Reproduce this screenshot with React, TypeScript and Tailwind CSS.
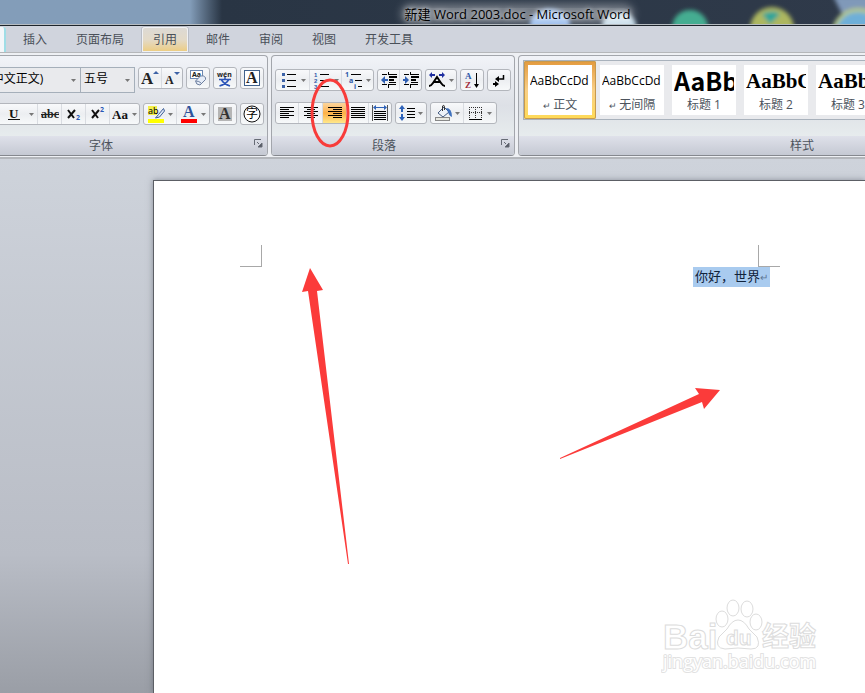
import type { ReactNode } from "react";
import clsx from "clsx";

const TABS = ["插入", "页面布局", "引用", "邮件", "审阅", "视图", "开发工具"];
const ACTIVE_TAB = "引用";

const STYLES = [
  { name: "正文", sample: "AaBbCcDd", mark: true, font: "text-xs" },
  { name: "无间隔", sample: "AaBbCcDd", mark: true, font: "text-xs" },
  {
    name: "标题 1",
    sample: "AaBbC",
    mark: false,
    font: "font-['Noto_Sans_CJK_SC',sans-serif] text-[25px] font-bold",
  },
  {
    name: "标题 2",
    sample: "AaBbC",
    mark: false,
    font: "font-['Liberation_Serif',serif] text-[21px] font-bold",
  },
  {
    name: "标题 3",
    sample: "AaBbC",
    mark: false,
    font: "font-['Liberation_Serif',serif] text-[21px] font-bold",
  },
];

interface ToolProps {
  label: string;
  width: string;
  drop?: boolean;
  active?: boolean;
  children?: ReactNode;
}

function Tool({ label, width, drop, active, children }: ToolProps) {
  return (
    <button
      type="button"
      aria-label={label}
      className={clsx(
        "flex h-full flex-none items-center justify-center gap-[3px] border-l border-[#d9dce1] first:border-l-0",
        width,
        active && "bg-linear-to-b from-[#fbd59c] via-[#fdb045] to-[#ffe88a]",
      )}
    >
      {children}
      {drop && (
        <svg width="5" height="3" viewBox="0 0 5 3" className="flex-none">
          <path d="M0 0h5L2.500 3z" fill="#777" />
        </svg>
      )}
    </button>
  );
}

function ToolBox({ width, children }: { width: string; children: ReactNode }) {
  return (
    <div
      className={clsx(
        "flex h-[22px] flex-none justify-end overflow-hidden rounded-[3px] border border-[#b3b6bc] bg-linear-to-b from-[#f8f9fb] via-[#eceef1] to-[#f7f9fa]",
        width,
      )}
    >
      {children}
    </div>
  );
}

function Icon({ w = 18, h = 18, children }: { w?: number; h?: number; children: ReactNode }) {
  return (
    <svg width={w} height={h} viewBox={`0 0 ${w} ${h}`} className="flex-none">
      {children}
    </svg>
  );
}

function AlignIcon({ rows }: { rows: [number, number][] }) {
  return (
    <Icon w={14} h={12}>
      {rows.map(([x, width], i) => (
        <rect key={i} x={x} y={i * 2} width={width} height="1" fill="#000" />
      ))}
    </Icon>
  );
}

interface GroupProps {
  title: string;
  className: string;
  children: ReactNode;
}

function Group({ title, className, children }: GroupProps) {
  return (
    <section
      className={clsx(
        "flex h-[101px] flex-none flex-col overflow-hidden rounded-[4px] border border-[#a3a6ac] border-b-[#85888e] bg-linear-to-b from-[#f1f3f8] via-[#dde0e6] to-[#edf3f2]",
        className,
      )}
    >
      <div className="flex-1">{children}</div>
      <div className="flex h-[19px] flex-none items-center bg-linear-to-b from-[#dfe1ea] to-[#c5c9d3]">
        <span className="flex-1 text-center text-[#4c535c]">{title}</span>
        <button type="button" aria-label={`${title}设置`} className="flex w-[18px] justify-end pr-1 pb-1">
          <svg width="9" height="9" viewBox="0 0 9 9">
            <path d="M.5 6V.5H7" fill="none" stroke="#666b75" />
            <path d="M3 3l2 2M8 4v4H4z" fill="#555a64" stroke="#666b75" />
          </svg>
        </button>
      </div>
    </section>
  );
}

function TitleBar() {
  return (
    <header className="relative flex h-[26px] flex-none items-center justify-center overflow-hidden border-b border-[#1d242b] bg-linear-to-r from-[#839db9] from-[190px] via-[#293544] via-[222px] to-[#2f3a4a] pt-[2px] pl-[170px]">
      <svg
        className="absolute top-0 right-0"
        width="360"
        height="25"
        viewBox="0 0 360 25"
        aria-hidden="true"
      >
        <defs>
          <filter id="soft">
            <feGaussianBlur stdDeviation="2" />
          </filter>
        </defs>
        <g filter="url(#soft)">
          <path d="M328-4h40v40h-20z" fill="#8099b9" />
          <ellipse cx="45" cy="24" rx="20" ry="15" fill="#8fb6ec" />
          <ellipse cx="114" cy="26" rx="17" ry="14" fill="#c5dbe9" />
          <circle cx="185" cy="28" r="18" fill="#45ad91" />
          <circle cx="267" cy="29" r="22" fill="#adb760" />
          <path d="M257 14q12-5 18 0l-10 10z" fill="#2fa49a" />
          <circle cx="353" cy="34" r="24" fill="#6eafd8" stroke="#b6c989" strokeWidth="4" />
        </g>
      </svg>
      <h1 className="relative rounded-full bg-white/35 font-['Open_Sans','Noto_Sans_CJK_SC',sans-serif] text-[13px] leading-3 whitespace-nowrap text-black shadow-[0_0_8px_4px_rgba(255,255,255,0.35)] text-shadow-[0_0_5px_#fff]">
        新建 Word 2003.doc - Microsoft Word
      </h1>
      <div className="absolute inset-x-0 bottom-0 h-px bg-[#b6bcc1]" />
    </header>
  );
}

function TabBar() {
  return (
    <nav className="flex h-[27px] flex-none items-end border-b border-[#b5b7ba] bg-[#d0d4dd]">
      <div className="h-[25px] w-[6px] rounded-tr-[3px] border-r-2 border-[#9fdde6] bg-[#f3f6f9]" />
      <div className="flex gap-[7px] pl-[6px]">
        {TABS.map((tab) => (
          <button
            key={tab}
            type="button"
            className={clsx(
              "h-[25px] flex-none rounded-t-[3px] px-[11px] whitespace-nowrap text-[#4a5059]",
              tab === ACTIVE_TAB &&
                "bg-linear-to-b from-[#dcd9d5] via-[#e3dac8] to-[#edcc7d] inset-ring inset-ring-[#f0f1f4] ring ring-[#b9bdc6]",
            )}
          >
            {tab}
          </button>
        ))}
      </div>
    </nav>
  );
}

function Combo({ label, value, className }: { label: string; value: string; className: string }) {
  return (
    <div className={clsx("relative flex-none", className)}>
      <select
        aria-label={label}
        className="h-[26px] w-full appearance-none border border-[#a5afba] bg-[#e9eaed] px-[3px] pb-[2px] text-black"
      >
        <option>{value}</option>
      </select>
      <svg
        width="5"
        height="3"
        viewBox="0 0 5 3"
        className="pointer-events-none absolute top-[12px] right-[5px]"
      >
        <path d="M0 0h5L2.500 3z" fill="#777" />
      </svg>
    </div>
  );
}

function FontGroup() {
  return (
    <Group title="字体" className="-ml-[48px] w-[316px]">
      <div className="flex h-[47px] items-start gap-[3px] pt-[11px]">
        <div className="flex">
          <Combo label="字体" value="宋体 (中文正文)" className="w-[128px] [&>select]:pl-[7px]" />
          <Combo label="字号" value="五号" className="-ml-px w-[55px]" />
        </div>
        <ToolBox width="w-[45px]">
          <Tool label="增大字体" width="w-[22px]">
            <Icon>
              <text x="0" y="15" className="font-['Liberation_Serif',serif] text-[17px] font-bold" fill="#222">A</text>
              <path d="M12 5h6l-3-3z" fill="#3c62a6" />
            </Icon>
          </Tool>
          <Tool label="缩小字体" width="w-[21px]">
            <Icon>
              <text x="2" y="15" className="font-['Liberation_Serif',serif] text-[12px] font-bold" fill="#222">A</text>
              <path d="M11 3h6l-3 3z" fill="#3c62a6" />
            </Icon>
          </Tool>
        </ToolBox>
        <ToolBox width="w-[24px]">
          <Tool label="清除格式" width="w-[22px]">
            <Icon>
              <rect x="1.500" y="1.500" width="12" height="8" fill="#fff" stroke="#6b86b0" />
              <text x="3" y="8" className="font-sans text-[7px] font-bold" fill="#222">Aa</text>
              <path d="M6.500 12l5-5q3-1 5 1.500v2L11 16q-4 0-4.500-4z" fill="#e6edf8" stroke="#6d7f9f" />
              <path d="M7 12q3 0 5 2" fill="none" stroke="#6d7f9f" />
            </Icon>
          </Tool>
        </ToolBox>
        <ToolBox width="w-[24px]">
          <Tool label="拼音指南" width="w-[22px]">
            <Icon>
              <text x="1" y="8" className="font-sans text-[7px] font-bold" fill="#222">wén</text>
              <path d="M9 8v3M3 10.500h12M5.500 11Q8 15 14 17M12.500 11Q10 15 3.500 17" fill="none" stroke="#2c55b8" strokeWidth="1.500" />
            </Icon>
          </Tool>
        </ToolBox>
        <ToolBox width="w-[24px]">
          <Tool label="字符边框" width="w-[22px]">
            <Icon>
              <rect x="1.500" y="1.500" width="15" height="15" fill="#fff" stroke="#40618b" />
              <text x="3" y="14" className="font-['Liberation_Serif',serif] text-[16px] font-bold" fill="#222">A</text>
            </Icon>
          </Tool>
        </ToolBox>
      </div>
      <div className="flex gap-[3px]">
        <ToolBox width="w-[187px]">
          <Tool label="下划线" width="w-[35px]" drop>
            <Icon w={20}>
              <text x="3" y="13" className="font-['Liberation_Serif',serif] text-[13px] font-bold" fill="#111">U</text>
              <rect x="2" y="14" width="12" height="1" fill="#111" />
            </Icon>
          </Tool>
          <Tool label="删除线" width="w-[24px]">
            <Icon>
              <text x="0" y="13" className="font-['Liberation_Serif',serif] text-[12px] font-bold" fill="#222">abc</text>
              <rect y="9" width="18" height="1" fill="#222" />
            </Icon>
          </Tool>
          <Tool label="下标" width="w-[24px]">
            <Icon>
              <path d="M3 5l6 8M10 5l-7 8" stroke="#111" strokeWidth="2" />
              <text x="11" y="15" className="font-sans text-[7px] font-bold" fill="#2a58b5">2</text>
            </Icon>
          </Tool>
          <Tool label="上标" width="w-[24px]">
            <Icon>
              <path d="M3 5l6 8M10 5l-7 8" stroke="#111" strokeWidth="2" />
              <text x="11" y="7" className="font-sans text-[7px] font-bold" fill="#2a58b5">2</text>
            </Icon>
          </Tool>
          <Tool label="更改大小写" width="w-[30px]" drop>
            <Icon w={17}>
              <text x="0" y="14" className="font-['Liberation_Serif',serif] text-[13px] font-bold" fill="#111">Aa</text>
            </Icon>
          </Tool>
        </ToolBox>
        <ToolBox width="w-[67px]">
          <Tool label="突出显示颜色" width="w-[32px]" drop>
            <Icon h={20}>
              <rect x="1" y="2" width="9" height="9" fill="#f4f04b" />
              <text x="1" y="10" className="font-sans text-[9px]" fill="#000">ab</text>
              <path d="M16.500 4.500l-5 6-3 3.500 4-1 5-6z" fill="#dfe8f7" stroke="#3e5e96" />
              <rect x="1" y="15" width="16" height="4" fill="#ff0" />
            </Icon>
          </Tool>
          <Tool label="字体颜色" width="w-[33px]" drop>
            <Icon h={20}>
              <text x="3" y="13" className="font-['Liberation_Serif',serif] text-[16px] font-bold" fill="#2f539b">A</text>
              <rect x="1" y="15" width="16" height="4" fill="#f00" />
            </Icon>
          </Tool>
        </ToolBox>
        <ToolBox width="w-[24px]">
          <Tool label="字符底纹" width="w-[22px]">
            <Icon>
              <rect x="2" y="2" width="14" height="14" fill="#b5b5b5" />
              <text x="3" y="14" className="font-['Liberation_Serif',serif] text-[16px] font-bold" fill="#333">A</text>
            </Icon>
          </Tool>
        </ToolBox>
        <ToolBox width="w-[24px]">
          <Tool label="带圈字符" width="w-[22px]">
            <Icon>
              <circle cx="9" cy="9" r="8" fill="#fff" stroke="#111" />
              <text x="3" y="13" className="font-['Noto_Sans_CJK_SC',sans-serif] text-[12px]" fill="#000">字</text>
            </Icon>
          </Tool>
        </ToolBox>
      </div>
    </Group>
  );
}

function ParagraphGroup() {
  return (
    <Group title="段落" className="w-[244px]">
      <div className="flex h-[46px] items-start gap-[3px] pt-[13px] pl-[3px]">
        <ToolBox width="w-[99px]">
          <Tool label="项目符号" width="w-[33px]" drop>
            <Icon>
              <path d="M2 2h3v3H2zM2 8h3v3H2zM2 14h3v3H2z" fill="#3b62a8" />
              <path d="M7 3h9v1H7zM7 9h9v1H7zM7 15h9v1H7z" />
            </Icon>
          </Tool>
          <Tool label="编号" width="w-[32px]" drop>
            <Icon>
              <text x="1" y="6" className="font-['Liberation_Sans',sans-serif] text-[6px] font-bold" fill="#2f57a8">1</text>
              <text x="1" y="12" className="font-['Liberation_Sans',sans-serif] text-[6px] font-bold" fill="#2f57a8">2</text>
              <text x="1" y="18" className="font-['Liberation_Sans',sans-serif] text-[6px] font-bold" fill="#2f57a8">3</text>
              <path d="M7 3h9v1H7zM7 9h9v1H7zM7 15h9v1H7z" />
            </Icon>
          </Tool>
          <Tool label="多级列表" width="w-[32px]" drop>
            <Icon>
              <text x="0" y="6" className="font-sans text-[7px] font-bold" fill="#2f57a8">1</text>
              <text x="4" y="12" className="font-sans text-[7px] font-bold" fill="#2f57a8">a</text>
              <text x="9" y="18" className="font-sans text-[7px] font-bold" fill="#2f57a8">i</text>
              <path d="M6 3h10v1H6zM10 9h7v1h-7zM13 15h4v1h-4z" />
            </Icon>
          </Tool>
        </ToolBox>
        <ToolBox width="w-[45px]">
          <Tool label="减少缩进量" width="w-[21px]">
            <Icon w={16}>
              <path d="M0 9l4-4v3h3v2H4v3z" fill="#2e5fb3" />
              <path d="M1 3h5v1H1zM7 3h9v1H7zM8 5h8v2H8zM8 8h5v2H8zM8 11h7v1H8zM1 13h5v1H1zM7 13h8v1H7zM7 1h1v2H7zM7 14h1v3H7z" />
            </Icon>
          </Tool>
          <Tool label="增加缩进量" width="w-[22px]">
            <Icon w={16}>
              <path d="M6 9L2 5v3H0v2h2v3z" fill="#2e5fb3" />
              <path d="M1 3h5v1H1zM7 3h9v1H7zM8 5h8v2H8zM8 8h5v2H8zM8 11h7v1H8zM1 13h5v1H1zM7 13h8v1H7zM7 1h1v2H7zM7 14h1v3H7z" />
            </Icon>
          </Tool>
        </ToolBox>
        <ToolBox width="w-[32px]">
          <Tool label="中文版式" width="w-[30px]" drop>
            <Icon>
              <path d="M1 15q2 0 4-3l4-6 4 6q2 3 4 3M5 11h8" fill="none" stroke="#000" strokeWidth="2" />
              <path d="M1 4l3-3v2h3v2H4v2zM17 4l-3-3v2h-3v2h3v2z" fill="#1f2fa0" />
            </Icon>
          </Tool>
        </ToolBox>
        <ToolBox width="w-[24px]">
          <Tool label="排序" width="w-[22px]">
            <Icon>
              <text x="2" y="8" className="font-['Liberation_Serif',serif] text-[9px] font-bold" fill="#2c58a8">A</text>
              <text x="2" y="17" className="font-['Liberation_Serif',serif] text-[9px] font-bold" fill="#a02c38">Z</text>
              <path d="M13 2h1v11h2l-2.500 4L11 13h2z" />
            </Icon>
          </Tool>
        </ToolBox>
        <ToolBox width="w-[24px]">
          <Tool label="显示编辑标记" width="w-[22px]">
            <Icon>
              <path d="M13.500 4v4H8" fill="none" stroke="#000" strokeWidth="1.500" />
              <path d="M5 8l4-3v6zM9 13l-4-3v2H3v2h2v2z" />
            </Icon>
          </Tool>
        </ToolBox>
      </div>
      <div className="flex gap-[3px] pl-[3px]">
        <ToolBox width="w-[117px]">
          <Tool label="左对齐" width="w-[22px]">
            <AlignIcon rows={[[0, 14], [0, 9], [0, 14], [0, 9], [0, 14], [0, 9]]} />
          </Tool>
          <Tool label="居中" width="w-[24px]">
            <AlignIcon rows={[[0, 14], [3, 8], [0, 14], [3, 8], [0, 14], [3, 8]]} />
          </Tool>
          <Tool label="右对齐" width="w-[24px]" active>
            <AlignIcon rows={[[0, 14], [5, 9], [0, 14], [5, 9], [0, 14], [5, 9]]} />
          </Tool>
          <Tool label="两端对齐" width="w-[22px]">
            <AlignIcon rows={[[0, 14], [0, 14], [0, 14], [0, 14], [0, 14], [0, 14]]} />
          </Tool>
          <Tool label="分散对齐" width="w-[23px]">
            <Icon>
              <path d="M1 1h1v16H1zM16 1h1v16h-1z" fill="#555" />
              <path d="M3 7h12v1H3zM3 9h12v1H3zM3 11h12v1H3zM3 13h12v1H3zM3 15h12v1H3z" />
              <path d="M2 3.500L5 1v2h8V1l3 2.500L13 6V4H5v2z" fill="#2e62b8" />
            </Icon>
          </Tool>
        </ToolBox>
        <ToolBox width="w-[32px]">
          <Tool label="行距" width="w-[30px]" drop>
            <Icon w={16}>
              <path d="M3 1l3 4H4v3H2V5H0zM3 17l3-4H4v-3H2v3H0z" fill="#2e62b8" />
              <path d="M8 4h8v1H8zM8 7h8v1H8zM8 10h8v1H8zM8 13h8v1H8z" />
            </Icon>
          </Tool>
        </ToolBox>
        <ToolBox width="w-[67px]">
          <Tool label="底纹" width="w-[32px]" drop>
            <Icon>
              <path d="M4 9l6-6 5 5-6 5z" fill="#eef2f8" stroke="#445b80" />
              <path d="M8.500 7V2q1.500-2 2 1v3" fill="none" stroke="#333" />
              <path d="M12 4q6 0 6 9-3-1-4-5z" fill="#3f71bd" />
              <rect x="1.500" y="13.500" width="14" height="3" fill="#e8e8e0" stroke="#888" />
            </Icon>
          </Tool>
          <Tool label="边框" width="w-[33px]" drop>
            <Icon w={16}>
              <path d="M1.500 14V3M7.500 14V3M13.500 14V3M1 3.500h13M1 8.500h13" fill="none" stroke="#333" strokeDasharray="1 1" />
              <path d="M1 15h13v1H1z" />
            </Icon>
          </Tool>
        </ToolBox>
      </div>
    </Group>
  );
}

function StylesGroup() {
  return (
    <Group title="样式" className="w-[586px]">
      <div className="mt-1 ml-1 flex h-[60px] border border-[#a9b2bc] bg-[#e9eaed]">
        {STYLES.map((style, i) => (
          <button
            key={style.name}
            type="button"
            className={clsx(
              "h-[58px] w-[72px] flex-none p-1",
              i === 0 &&
                "rounded-[2px] bg-linear-to-b from-[#e39a3c] via-[#f9cf86] to-[#ffdb55] inset-ring inset-ring-[#c79a4e]",
            )}
          >
            <span className="flex h-full flex-col overflow-hidden bg-white">
              <span
                className={clsx(
                  "mr-[2px] ml-[2px] flex h-[32px] flex-none items-center overflow-hidden text-black",
                  style.font,
                )}
              >
                {style.sample}
              </span>
              <span className="text-center leading-4 text-[#4c535c]">
                {style.mark && <span className="text-[9px]">↵ </span>}
                {style.name}
              </span>
            </span>
          </button>
        ))}
      </div>
    </Group>
  );
}

function Watermark() {
  return (
    <svg
      className="absolute right-[42px] bottom-[14px]"
      width="162"
      height="82"
      viewBox="0 0 162 82"
      fill="#fff"
      stroke="#dcdcdc"
    >
      <text x="2" y="52" className="font-['Liberation_Sans',sans-serif] text-[35px] font-bold">Bai</text>
      <ellipse cx="61" cy="22" rx="6" ry="8" />
      <ellipse cx="72" cy="11" rx="6" ry="8" />
      <ellipse cx="86" cy="12" rx="6" ry="8" />
      <ellipse cx="95" cy="25" rx="6" ry="8" />
      <path d="M77 23q6 0 11 9l8 8q5 12-6 12-13-2-26 0-11-1-6-12l8-8q5-9 11-9z" />
      <text x="65" y="48" className="font-['Liberation_Sans',sans-serif] text-[21px] font-bold">du</text>
      <text x="101" y="49" className="font-['Noto_Sans_CJK_SC',sans-serif] text-[27px] font-bold">经验</text>
      <text
        x="2"
        y="71"
        stroke="#e2e2e2"
        strokeWidth="2"
        paintOrder="stroke"
        className="font-['Open_Sans',sans-serif] text-[18px]"
      >
        jingyan.baidu.com
      </text>
    </svg>
  );
}

function Document() {
  return (
    <main className="flex flex-1 bg-linear-to-b from-[#ced3db] via-[#b9bdc6] via-74% to-[#9a9ea6] pt-[21px] pl-[153px]">
      <article className="relative flex-1 border-t border-l border-[#5c5f65] bg-white pt-[64px] pl-[86px] shadow-[0_0_6px_rgba(70,75,90,0.5)]">
        <div className="w-[540px]">
          <div className="flex justify-between">
            <div className="size-[22px] border-r border-b border-[#a8a8a8]" />
            <div className="size-[22px] border-b border-l border-[#a8a8a8]" />
          </div>
          <p className="mr-[10px] text-right">
            <span className="inline-block bg-[#a9cbef] px-[2px] text-[13px] leading-[19px] text-[#10233b]">
              你好，世界<span className="text-[10px] text-[#5e7694]">↵</span>
            </span>
          </p>
        </div>
        <Watermark />
      </article>
    </main>
  );
}

// Red pen marks pointing at the button and the aligned text
function Annotations() {
  return (
    <svg
      className="pointer-events-none absolute top-0 left-0"
      width="865"
      height="693"
      viewBox="0 0 865 693"
      fill="#fb3b3a"
    >
      <ellipse cx="330" cy="113" rx="18" ry="33" fill="none" stroke="#f83c3a" strokeWidth="3" />
      <path d="M310 268l13 22-6 1 32 273h-1L308 291l-6 1z" />
      <path d="M720 390l-16 19-2-7-142 57v-1l139-64-4-6z" />
    </svg>
  );
}

export default function App() {
  return (
    <div className="relative flex min-h-screen flex-col overflow-hidden font-['Open_Sans','Noto_Sans_CJK_SC',sans-serif] text-xs">
      <TitleBar />
      <TabBar />
      <div className="relative flex flex-none gap-[3px] overflow-hidden border-b-2 border-[#b3b6bb] bg-[#eef0f4] pt-[2px] pb-px">
        <FontGroup />
        <ParagraphGroup />
        <StylesGroup />
      </div>
      <Document />
      <Annotations />
    </div>
  );
}
